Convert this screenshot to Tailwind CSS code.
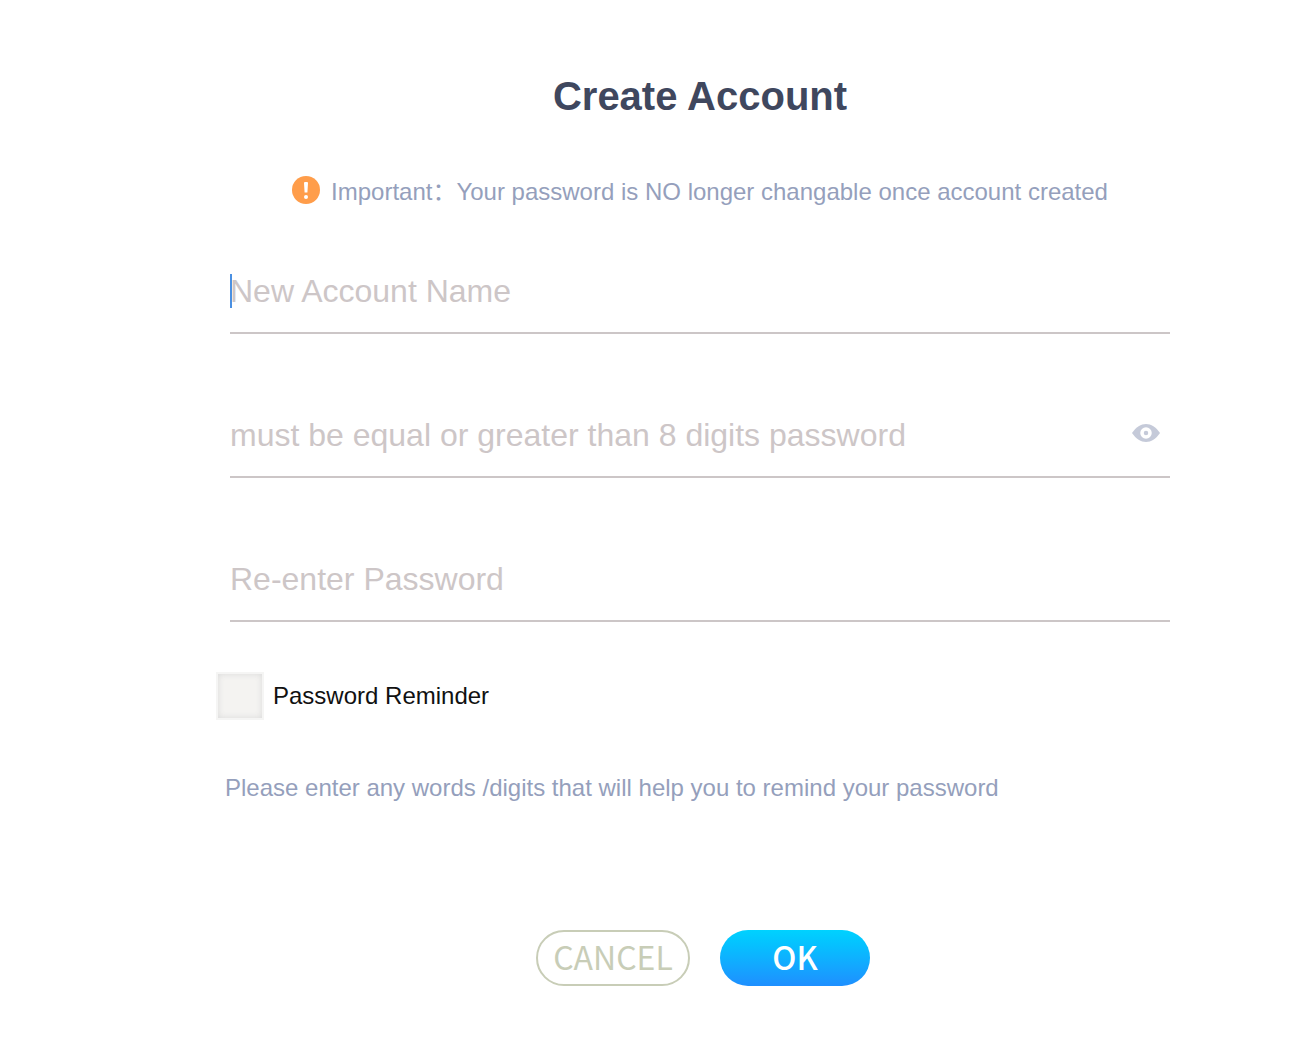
<!DOCTYPE html>
<html lang="en">
<head>
<meta charset="utf-8">
<title>Create Account</title>
<script src="https://cdn.jsdelivr.net/npm/@tailwindcss/browser@4"></script>
</head>
<body class="min-h-screen bg-white font-['Liberation_Sans','Noto_Sans_CJK_SC',sans-serif]">
<main class="pl-[230px] pr-[138px] pt-[72px] pb-[52px]">
<form>
<h1 class="text-center text-[40px] leading-[48px] font-bold text-[#3f475e]">Create Account</h1>
<p class="mt-[52px] flex h-9 items-center justify-center gap-[11px] whitespace-nowrap text-2xl text-[#959fbc]">
<svg class="size-7 shrink-0" viewBox="0 0 28 28" aria-hidden="true"><circle cx="14" cy="14" r="14" fill="#ff9d4a"/><path d="M12 7q0-1 1-1h2q1 0 1 1l-.6 9.500h-2.800z" fill="#fff"/><circle cx="14" cy="21" r="2" fill="#fff"/></svg>
<span class="pt-1">Important&#xFF1A;Your password is NO longer changable once account created</span>
</p>
<div class="mt-[42px] flex h-[84px] items-center border-b-2 border-[#ccc6c7]">
<span class="z-10 -mr-0.5 h-[34px] w-0.5 bg-[#4a90e2]"></span>
<input aria-label="New Account Name" placeholder="New Account Name" class="h-full w-full text-[32px] outline-none placeholder:text-[#cdc6c7]">
</div>
<div class="mt-[60px] flex h-[84px] items-center border-b-2 border-[#ccc6c7] pr-2.5">
<input type="password" aria-label="Password" placeholder="must be equal or greater than 8 digits password" class="h-full w-full text-[32px] outline-none placeholder:text-[#cdc6c7]">
<button type="button" aria-label="Show password" class="pb-1"><svg class="h-5 w-7" viewBox="0 0 28 20"><path d="M0 10C4 4 9 1 14 1s10 3 14 9c-4 6-9 9-14 9S4 16 0 10z" fill="#c5cad9"/><circle cx="14" cy="10" r="4" fill="none" stroke="#fff" stroke-width="3.500"/></svg></button>
</div>
<div class="mt-[60px] flex h-[84px] items-center border-b-2 border-[#ccc6c7]">
<input type="password" aria-label="Re-enter Password" placeholder="Re-enter Password" class="h-full w-full text-[32px] outline-none placeholder:text-[#cdc6c7]">
</div>
<label class="-ml-3.5 mt-[50px] flex w-fit items-center gap-[9px] text-2xl text-[#111]"><input type="checkbox" class="size-12 appearance-none border-2 border-[#f5f5f4] bg-[#f4f3f1] shadow-[inset_0_0_6px_#d9d9d9]">Password Reminder</label>
<p class="-ml-[5px] mt-[52px] text-2xl leading-8 text-[#959fbc]">Please enter any words /digits that will help you to remind your password</p>
<div class="mt-[126px] flex justify-center gap-[30px] pl-1.5 font-['Noto_Sans_CJK_SC',sans-serif] text-[32px]">
<button type="button" class="flex h-14 w-[154px] items-center justify-center rounded-full border-2 border-[#c8cdb7] pb-1 text-[#c8cdb7]">CANCEL</button>
<button type="submit" class="flex h-14 w-[150px] items-center justify-center rounded-full bg-linear-to-b from-[#00d2ff] to-[#1e8fff] pb-1 font-medium text-white">OK</button>
</div>
</form>
</main>
</body>
</html>
